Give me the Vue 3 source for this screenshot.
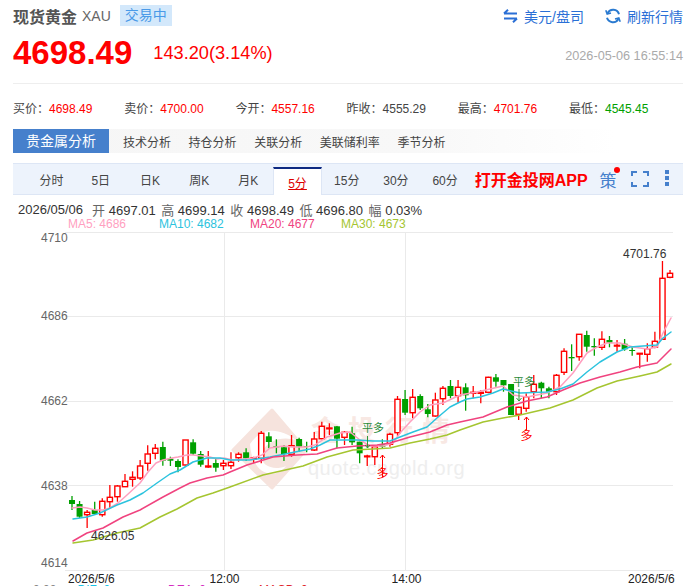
<script setup>
const stats = [
  { k: '买价：', v: '4698.49', c: 'up' },
  { k: '卖价：', v: '4700.00', c: 'up' },
  { k: '今开：', v: '4557.16', c: 'up' },
  { k: '昨收：', v: '4555.29', c: 'flat' },
  { k: '最高：', v: '4701.76', c: 'up' },
  { k: '最低：', v: '4545.45', c: 'down' }
]
const analysis = ['技术分析', '持仓分析', '关联分析', '美联储利率', '季节分析']
const periods = ['分时', '5日', '日K', '周K', '月K', '5分', '15分', '30分', '60分']
const quote = [
  ['开', '4697.01'], ['高', '4699.14'], ['收', '4698.49'], ['低', '4696.80'], ['幅', '0.03%']
]
const mas = [
  { t: 'MA5: 4686', c: 'm5' }, { t: 'MA10: 4682', c: 'm10' },
  { t: 'MA20: 4677', c: 'm20' }, { t: 'MA30: 4673', c: 'm30' }
]
const raw = [
  ['g',496,510,500,504],['g',501,518,504,516.7],['r',510,528,512.3,514.7],['g',501.7,515,510,514],
  ['r',498.3,516.7,501.3,514.7],['r',485,508.3,497.3,501.7],['r',485,501.7,486,496.7],['r',474,486.7,481.3,486.7],
  ['r',471.3,486.7,477.3,479.3],['r',460,480,466,478],['r',445.3,470.7,454,463.3],['r',444,459.3,448.3,453.3],
  ['g',441.7,465.7,447,460.7],['g',456.7,466,458.7,460.7],['g',459.3,472.3,461,467],['r',440,465.7,440,465],
  ['g',439.3,455,442.3,453.7],['g',451,466.7,454,464.7],['r',451,467.7,466,467],['g',458.3,471.7,463,467.7],
  ['r',460,470,463.3,465.7],['r',452.3,469,462.3,465.7],['r',452.3,461.7,454.3,457.7],['g',448.3,461,452.3,458.3],
  ['r',456.7,463.3,457.7,459],['r',431,463.3,433.3,458.3],['g',432.3,448.3,436.3,442],['g',439.3,453.3,446.3,447.3],
  ['g',445,461,447.3,454],['r',435,456.7,445.7,454.3],['g',437.7,451.7,439,446.7],['g',441.7,452.3,446,446.7],
  ['r',432,451,439,450],['r',421.7,439.3,426.3,438.7],['r',423.3,435,428,428.7],['g',426,448.3,426.3,438.7],
  ['r',431,445,432.3,437.3],['g',426.7,445,433.3,442.3],['g',441.7,463.3,441.7,453.3],['r',454.7,466,456,456.7],
  ['r',446,465,446.7,456.7],['g',439.3,448.3,444.3,446.7],['r',432.7,446.7,434.3,444.3],['r',396,436,399.3,432.7],
  ['g',390,415,399,412.7],['r',389,418.3,397.3,412.7],['g',394.3,410,396,408.3],['g',404,417.3,409.3,414],
  ['r',392.7,416.7,400,416],['r',386,405,388.3,398.7],['g',380,398.3,386,396],['r',380,402.7,387.3,395.7],
  ['g',383.3,410.7,387.3,395.3],['r',386,398.3,392.3,393.3],['r',390,403.3,392.3,393.3],['r',376.7,393.3,377.3,392.3],
  ['g',374,386.7,377.3,381.7],['g',380,391.7,380,385.3],['g',384,415,384,415],['r',406.7,420,407.3,414.3],
  ['r',393.3,411.7,396.7,408.3],['r',375,398.3,384.3,391.7],['g',381.7,398.3,382.7,388.3],['g',386.7,398.3,388.3,391.7],
  ['r',374,395,375.3,391.7],['r',348.3,375,351.3,372.3],['g',344.3,371,357,358.3],['r',334.3,360.7,334.3,356.7],
  ['g',330.7,351.7,335,346.7],['g',338.3,355.7,346,347.3],['r',331.3,350,339.3,347.3],['g',336,347.3,340,342.7],
  ['r',340,351.7,345.3,346],['g',339,350.7,343.7,349.3],['g',346.7,355.7,350,351],['r',353.3,368.3,353.3,354],
  ['r',343.3,361.7,348.7,354.3],['r',331.7,348.3,341.3,347.3],['r',261,339.3,278.3,339.3],['r',270,278.3,273.3,277.3]
]
const candles = raw.map((c, i) => {
  const x = 72 + 7.57 * i
  return {
    x, up: c[0] === 'r', wt: c[1], wb: c[2], bt: c[3], bh: Math.max(c[4] - c[3], 0.8)
  }
})
const lines = [
  { c: '#ff9fbf', p: '72,508 80,507 87,508 95,510 103,510 110,508 118,503 127,495 140,483 148,472 156,463 163,460 172,458 178,457 187,455 193,455 202,456 210,457 217,459 224,458 233,460 245,459 253,458 262,455 270,448 283,446 292,447 307,447 315,445 327,437 340,433 350,432 360,440 370,446 383,446 393,443 400,433 410,422 420,412 430,405 443,403 460,395 477,392 503,386 513,395 527,397 547,393 560,387 573,373 587,353 597,347 607,343 620,343 633,347 647,349 657,347 663,333 671,318' },
  { c: '#2cc3de', p: '73,519 87,517 100,513 117,505 130,500 143,493 157,483 170,474 180,470 193,462 207,458 220,458 230,460 250,460 270,457 290,453 310,449 320,445 330,440 343,440 357,440 373,441 390,441 400,437 413,432 427,427 437,418 450,407 460,402 467,399 480,397 493,393 503,389 520,393 547,392 560,389 573,384 587,372 600,362 617,352 630,347 643,346 657,345 663,338 671,332' },
  { c: '#f0437f', p: '73,541 87,533 103,528 123,517 140,510 163,497 180,488 190,483 207,478 223,475 230,472 247,465 273,457 297,455 317,454 337,448 357,446 377,445 390,443 410,437 430,432 447,425 460,422 483,417 507,407 527,401 547,397 563,390 580,383 600,377 620,372 637,367 657,363 671,349' },
  { c: '#a5c530', p: '73,543 93,540 117,533 140,528 160,517 177,509 197,498 213,493 230,487 263,475 303,466 327,457 353,450 373,449 390,448 410,443 430,439 447,435 460,430 483,422 503,418 520,415 550,408 573,400 597,388 617,381 640,376 657,372 671,364' }
]
const hGrid = [232, 316, 401, 485, 570]
const axis = [
  { t: '4710', y: 242 }, { t: '4686', y: 320 }, { t: '4662', y: 405 }, { t: '4638', y: 490 }, { t: '4614', y: 567 }
]
</script>

<template>
  <div class="page">
    <header class="top">
      <h1 class="title">现货黄金</h1>
      <span class="code">XAU</span>
      <span class="badge">交易中</span>
      <span class="spacer"></span>
      <a class="act act-swap">
        <svg width="15" height="14" viewBox="0 0 15 14" fill="none" stroke="#2a6fd6" stroke-width="2">
          <path d="M1 4.5 H14 M1 4.5 L5 .8" />
          <path d="M14 9.5 H1 M14 9.5 L10 13.2" />
        </svg>
        美元/盘司
      </a>
      <a class="act">
        <svg width="16" height="16" viewBox="0 0 16 16" fill="none" stroke="#2a7ad0" stroke-width="2">
          <path d="M14 6.2 A6.2 6.2 0 0 0 2.6 5" />
          <path d="M2 9.8 A6.2 6.2 0 0 0 13.4 11" />
          <path d="M0.8 2.2 L2.2 6 L6 5" stroke-width="1.6" />
          <path d="M15.2 13.8 L13.8 10 L10 11" stroke-width="1.6" />
        </svg>
        刷新行情
      </a>
    </header>

    <section class="price-row">
      <strong class="price">4698.49</strong>
      <span class="change">143.20(3.14%)</span>
      <span class="spacer"></span>
      <time class="time">2026-05-06 16:55:14</time>
    </section>

    <section class="stats">
      <div v-for="s in stats" :key="s.k" class="stat">
        {{ s.k }}<span :class="s.c">{{ s.v }}</span>
      </div>
    </section>

    <nav class="analysis">
      <span class="analysis-on">贵金属分析</span>
      <span v-for="a in analysis" :key="a" class="analysis-item">{{ a }}</span>
    </nav>

    <nav class="periods">
      <span v-for="p in periods" :key="p" class="period" :class="{ on: p === '5分' }">
        <span class="period-t">{{ p }}</span>
      </span>
      <span class="open-app">打开金投网APP</span>
      <span class="strategy">策<i class="dot"></i></span>
      <svg class="fs" width="18" height="16" viewBox="0 0 18 16" fill="none" stroke="#4680cc" stroke-width="2">
        <path d="M1 5 V1 H6 M12 1 H17 V5 M17 11 V15 H12 M6 15 H1 V11" />
      </svg>
      <span class="more"><i></i><i></i><i></i></span>
    </nav>

    <div class="quote">
      <span class="q-date">2026/05/06</span>
      <span v-for="q in quote" :key="q[0]" class="q-item"><em>{{ q[0] }}</em> {{ q[1] }}</span>
    </div>
    <div class="ma">
      <span v-for="m in mas" :key="m.t" class="ma-item" :class="m.c">{{ m.t }}</span>
    </div>

    <svg class="chart" width="690" height="354" viewBox="0 232 690 354">
      <line v-for="y in hGrid" :key="y" x1="65" x2="673" :y1="y + 0.5" :y2="y + 0.5" stroke="#eaeaea" />
      <line x1="224.5" x2="224.5" y1="232" y2="570" stroke="#eaeaea" />
      <line x1="405.5" x2="405.5" y1="232" y2="570" stroke="#eaeaea" />

      <g class="wm">
        <path d="M272 410 L306 450 L272 488 L233 450 Z" fill="#f6e3dd" stroke="#f6e3dd" stroke-width="3" stroke-linejoin="round" />
        <path d="M250 444 C262 426 280 428 296 440 C282 436 268 440 262 452 C258 464 272 472 286 466 C276 480 252 476 250 444 Z" fill="#fff" />
        <text x="311" y="441" class="wm-cn">金投行情</text>
        <text x="308" y="475" class="wm-en">quote.cngold.org</text>
      </g>

      <g v-for="(c, i) in candles" :key="i">
        <line :x1="c.x" :x2="c.x" :y1="c.wt" :y2="c.wb" :stroke="c.up ? '#f00' : '#00a000'" stroke-width="1.3" />
        <rect v-if="c.up" :x="c.x - 2.6" :y="c.bt" width="5.2" :height="c.bh" fill="#fff" stroke="#f00" stroke-width="1.4" />
        <rect v-else :x="c.x - 3" :y="c.bt" width="6" :height="c.bh" fill="#00a000" />
      </g>

      <polyline v-for="l in lines" :key="l.c" :points="l.p" :stroke="l.c" fill="none" stroke-width="1.5" stroke-linejoin="round" stroke-linecap="round" />

      <text v-for="a in axis" :key="a.t" x="41" :y="a.y" class="ax">{{ a.t }}</text>
      <text x="623" y="258" class="lab">4701.76</text>
      <text x="91" y="540" class="lab">4626.05</text>

      <g class="buy">
        <text x="362" y="432" class="m-g">平多</text>
        <path d="M367.5 436 V448 M365 445 L367.5 448 L370 445" fill="none" stroke="#2a9a3a" />
        <path d="M382.5 477 V455 M380 458 L382.5 455 L385 458" fill="none" stroke="#f00" />
        <text x="376.5" y="478" class="m-r">多</text>
        <text x="513" y="386" class="m-g">平多</text>
        <path d="M519 389 V401 M516.5 398 L519 401 L521.5 398" fill="none" stroke="#2a9a3a" />
        <path d="M526.5 430 V417 M524 420 L526.5 417 L529 420" fill="none" stroke="#f00" />
        <text x="520.5" y="440" class="m-r">多</text>
      </g>

      <text x="68" y="583" class="xl">2026/5/6</text>
      <text x="209.5" y="583" class="xl">12:00</text>
      <text x="391.5" y="583" class="xl">14:00</text>
      <text x="628" y="583" class="xl">2026/5/6</text>

      <text x="33" y="594" class="bt" fill="#888">0.00</text>
      <text x="77.5" y="594" class="bt" fill="#19c3e6">DIF: 0</text>
      <text x="168" y="594" class="bt" fill="#d42bc0">DEA: 0</text>
      <text x="259" y="594" class="bt" fill="#e0242c">MACD: 0</text>
    </svg>
  </div>
</template>

<style scoped>
.page {
  width: 690px;
  height: 586px;
  overflow: hidden;
  background: #fff;
  font-family: "Liberation Sans", "Noto Sans CJK SC", sans-serif;
  color: #333;
  box-sizing: border-box;
  padding-top: 5px;
}
.spacer { flex: 1; }
.top {
  display: flex;
  align-items: center;
  height: 21px;
  padding: 0 7px 0 13px;
}
.title {
  margin: 0;
  font-size: 16px;
  font-weight: bold;
  color: #555;
}
.code { margin-left: 5px; font-size: 14px; color: #666; }
.badge {
  margin-left: 9px;
  padding: 0 5px;
  line-height: 21px;
  font-size: 14px;
  color: #4a9ae8;
  background: #d3e8fb;
}
.act {
  display: flex;
  align-items: center;
  gap: 6px;
  font-size: 14px;
  color: #2a6fd6;
}
.act-swap { margin-right: 21px; }
.price-row {
  display: flex;
  align-items: center;
  height: 40px;
  margin: 7px 7px 0 13px;
}
.price { font-size: 33px; font-weight: bold; color: #f00; }
.change { margin-left: 21px; font-size: 18.2px; color: #f00; }
.time { font-size: 12.7px; color: #aaa; margin-top: 6px; }
.stats {
  display: grid;
  grid-template-columns: repeat(6, 111.2px);
  align-items: center;
  height: 46px;
  margin: 10px 7px 0 13px;
  border-top: 1px solid #eee;
  font-size: 12px;
  color: #444;
}
.up { color: #f00; }
.flat { color: #444; }
.down { color: #00a000; }
.analysis {
  display: flex;
  align-items: center;
  gap: 17.6px;
  height: 24px;
  margin: -1px 7px 0 13px;
  font-size: 12px;
  background: linear-gradient(90deg, #f6f6f6 0%, #f8f8f8 60%, #fff 90%);
}
.analysis-on {
  width: 96px;
  line-height: 24px;
  text-align: center;
  font-size: 14px;
  color: #fff;
  background: #4680cc;
  margin-right: -3.6px;
}
.analysis-item { color: #444; }
.periods {
  display: flex;
  align-items: stretch;
  box-sizing: border-box;
  height: 32px;
  margin: 10px 7px 0 13px;
  padding-left: 14px;
  font-size: 12px;
  color: #444;
  background: #edf3fc;
  border-top: 1px solid #dde6f5;
  border-bottom: 1px solid #dde6f5;
}
.period {
  box-sizing: border-box;
  width: 49.2px;
  display: flex;
  align-items: center;
  justify-content: center;
  padding-top: 1px;
}
.period.on {
  margin: 3px 0 -1px;
  background: #fff;
  color: #d00;
  border-top: 2px solid #0e2a82;
  border-left: 1px solid #dde6f5;
  border-right: 1px solid #dde6f5;
}
.period.on .period-t { text-decoration: underline; }
.open-app {
  display: flex;
  align-items: center;
  margin-left: 5px;
  font-size: 16px;
  font-weight: bold;
  color: #f00;
}
.strategy {
  position: relative;
  display: flex;
  align-items: center;
  margin-left: 12px;
  font-size: 17px;
  color: #4680cc;
}
.dot {
  position: absolute;
  right: -3px;
  top: 3px;
  width: 6px;
  height: 6px;
  border-radius: 50%;
  background: #f00;
}
.fs { align-self: center; margin-left: 14px; }
.more {
  display: flex;
  flex-direction: column;
  justify-content: center;
  gap: 2px;
  margin-left: 16px;
  padding-bottom: 3px;
}
.more i { width: 4px; height: 4px; background: #4680cc; }
.quote {
  display: flex;
  align-items: center;
  height: 16px;
  margin-top: 6px;
  padding-left: 18px;
  font-size: 13px;
  color: #333;
  white-space: pre;
}
.q-date { margin-right: 9px; }
.q-item { margin-right: 5.5px; }
.q-item em { font-style: normal; color: #666; }
.ma {
  display: flex;
  align-items: center;
  height: 14px;
  padding-left: 68px;
  font-size: 12px;
}
.ma-item { width: 91px; }
.m5 { color: #ff9fbf; }
.m10 { color: #2cc3de; }
.m20 { color: #f0437f; }
.m30 { color: #a5c530; }
.chart { display: block; margin-top: 1px; }
.wm-cn { font-size: 28px; font-weight: bold; letter-spacing: 9px; fill: #f8e8e3; }
.wm-en { font-size: 20px; fill: #eeeeee; letter-spacing: .5px; }
.ax { font-size: 12px; fill: #666; }
.lab { font-size: 12px; fill: #333; }
.xl { font-size: 12px; fill: #222; }
.bt { font-size: 12px; }
.m-g { font-size: 11px; fill: #2a8a3a; }
.m-r { font-size: 12px; fill: #f00; }
</style>
